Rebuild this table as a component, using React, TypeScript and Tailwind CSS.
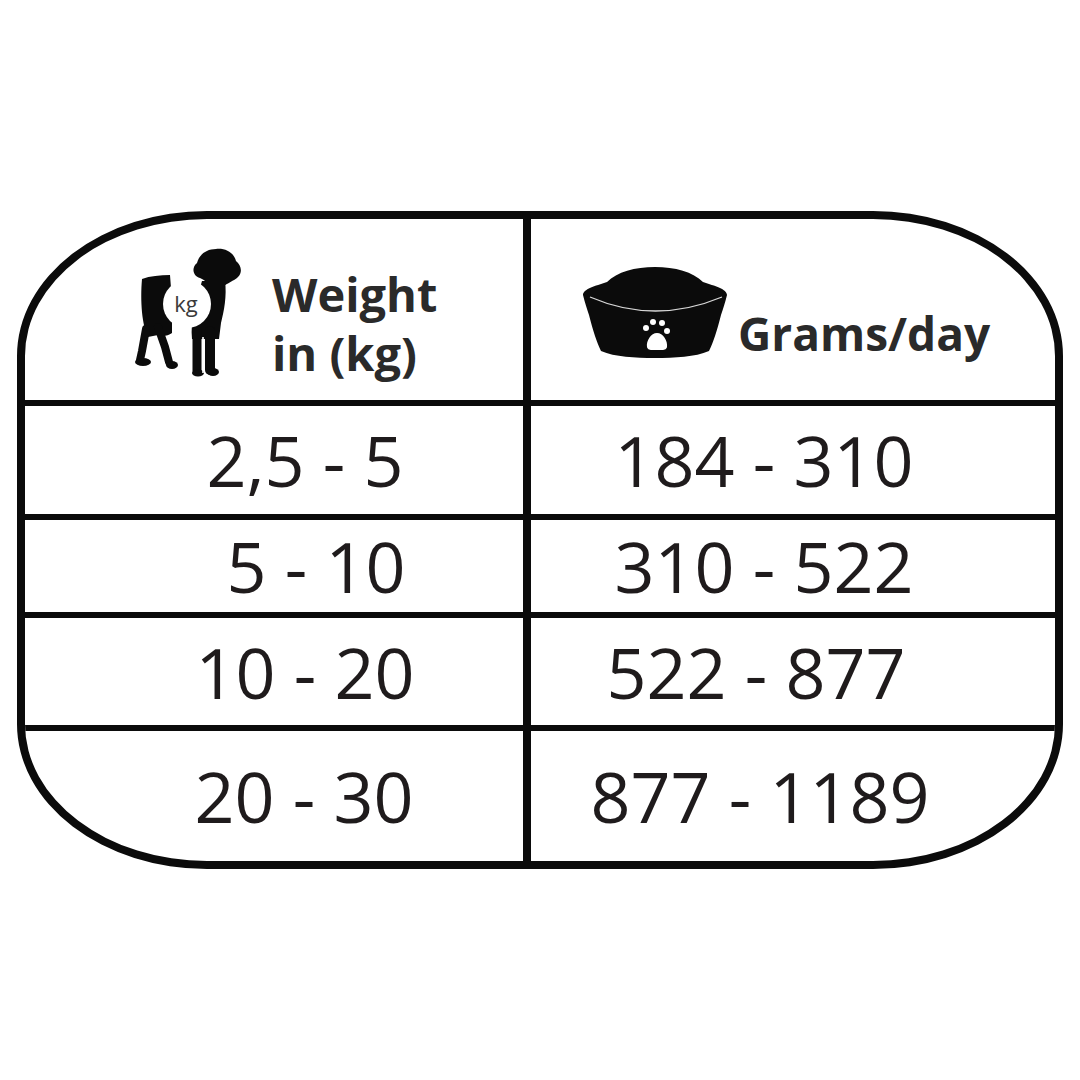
import React from 'react';

type Row = {
  weight: string;
  grams: string;
  height: string;
  leftPad: string;
  rightPad: string;
  last?: boolean;
};

const rows: Row[] = [
  { weight: '2,5 - 5', grams: '184 - 310', height: 'h-[114px]', leftPad: 'pl-[62px]', rightPad: 'pr-[58px]' },
  { weight: '5 - 10', grams: '310 - 522', height: 'h-[98px]', leftPad: 'pl-[84px]', rightPad: 'pr-[58px]' },
  { weight: '10 - 20', grams: '522 - 877', height: 'h-[113px]', leftPad: 'pl-[62px]', rightPad: 'pr-[74px]' },
  { weight: '20 - 30', grams: '877 - 1189', height: 'h-[130px]', leftPad: 'pl-[60px]', rightPad: 'pr-[66px]', last: true },
];

function DogIcon() {
  return (
    <svg width="120" height="145" viewBox="0 0 120 145" className="shrink-0">
      {/* rear */}
      <path d="M12,38 C20,35 30,34 40,34 L42,60 L42,92 C38,95 32,96 28,94 L18,96 C12,85 10,60 12,38 Z" fill="#0b0b0b" />
      <path d="M16,88 L12,110 L10,119" stroke="#0b0b0b" strokeWidth="8" strokeLinecap="round" fill="none" />
      <ellipse cx="13" cy="121" rx="8" ry="4" fill="#0b0b0b" />
      <path d="M28,86 L35,106 L39,121" stroke="#0b0b0b" strokeWidth="8" strokeLinecap="round" fill="none" />
      <ellipse cx="42" cy="124" rx="6" ry="4" fill="#0b0b0b" />
      {/* chest + front legs */}
      <path d="M72,40 L95,40 C97,55 94,70 91,82 L89,98 L62,98 C60,80 66,60 72,40 Z" fill="#0b0b0b" />
      <path d="M67,90 L67,130" stroke="#0b0b0b" strokeWidth="9" strokeLinecap="round" fill="none" />
      <ellipse cx="68" cy="132" rx="6" ry="3.5" fill="#0b0b0b" />
      <path d="M80,90 L80,129" stroke="#0b0b0b" strokeWidth="10" strokeLinecap="round" fill="none" />
      <ellipse cx="83" cy="131" rx="6" ry="4" fill="#0b0b0b" />
      <path d="M73,96 L73,132" stroke="#ffffff" strokeWidth="1.6" />
      {/* head */}
      <path
        d="M70,37 C63,35 61,27 67,22 C69,14 76,8 86,8 C96,7 104,12 106,20 C111,24 113,31 108,36 C104,40 97,42 93,46 L80,46 C78,41 74,39 70,37 Z"
        fill="#0b0b0b"
      />
      <circle cx="57" cy="63" r="24" fill="#ffffff" />
      <text
        x="56"
        y="71"
        textAnchor="middle"
        fontSize="22"
        fontFamily="'Open Sans', sans-serif"
        fill="#3a3a3a"
      >
        kg
      </text>
    </svg>
  );
}

function BowlIcon() {
  return (
    <svg width="160" height="105" viewBox="0 0 160 105" className="shrink-0">
      <path
        d="M8,36 C8,30 20,27 32,23 C42,13 60,8 80,8 C100,8 118,13 128,23 C140,27 152,30 152,36 C150,44 148,50 146,56 C142,72 138,84 134,92 C120,98 100,99 80,99 C60,99 40,98 26,92 C22,84 18,72 14,56 C12,50 10,44 8,36 Z"
        fill="#0b0b0b"
      />
      <path d="M15,38 Q80,66 147,38" stroke="#d8d8d8" strokeWidth="1.3" fill="none" />
      {/* paw */}
      <circle cx="71" cy="69" r="3" fill="#ffffff" />
      <circle cx="78" cy="63" r="3" fill="#ffffff" />
      <circle cx="87" cy="64" r="3" fill="#ffffff" />
      <circle cx="92" cy="72" r="3" fill="#ffffff" />
      <path d="M82,74 C88,74 93,82 92,88 C91,92 86,91 82,91 C78,91 73,92 72,88 C71,82 76,74 82,74 Z" fill="#ffffff" />
    </svg>
  );
}

export default function App() {
  return (
    <div className="flex h-screen w-full items-center justify-center bg-white font-['Open_Sans',sans-serif] text-[#1f1b1c]">
      <div className="flex h-[658px] w-[1046px] flex-col overflow-hidden rounded-[190px/145px] border-[8px] border-[#0b0b0b]">
        {/* Header */}
        <div className="flex h-[187px] shrink-0 border-b-[6px] border-[#0b0b0b]">
          <div className="flex w-[506px] shrink-0 items-start border-r-[8px] border-[#0b0b0b] pl-[105px] pt-[22px]">
            <DogIcon />
            <div className="ml-[22px] mt-[24px] text-[47px] font-bold leading-[59px] text-[#2a2a2a]">
              <div>Weight</div>
              <div>in (kg)</div>
            </div>
          </div>
          <div className="flex flex-1 items-start pl-[44px] pt-[40px]">
            <BowlIcon />
            <div className="ml-[3px] mt-[52px] text-[46px] font-bold leading-[45px] text-[#2a2a2a]">
              Grams/day
            </div>
          </div>
        </div>

        {rows.map((row) => (
          <div
            key={row.weight}
            className={`flex shrink-0 ${row.height} ${row.last ? '' : 'border-b-[6px] border-[#0b0b0b]'}`}
          >
            <div
              className={`flex w-[506px] shrink-0 items-center justify-center border-r-[8px] border-[#0b0b0b] ${row.leftPad} text-[70px] leading-none`}
            >
              {row.weight}
            </div>
            <div className={`flex flex-1 items-center justify-center ${row.rightPad} text-[70px] leading-none`}>
              {row.grams}
            </div>
          </div>
        ))}
      </div>
    </div>
  );
}
